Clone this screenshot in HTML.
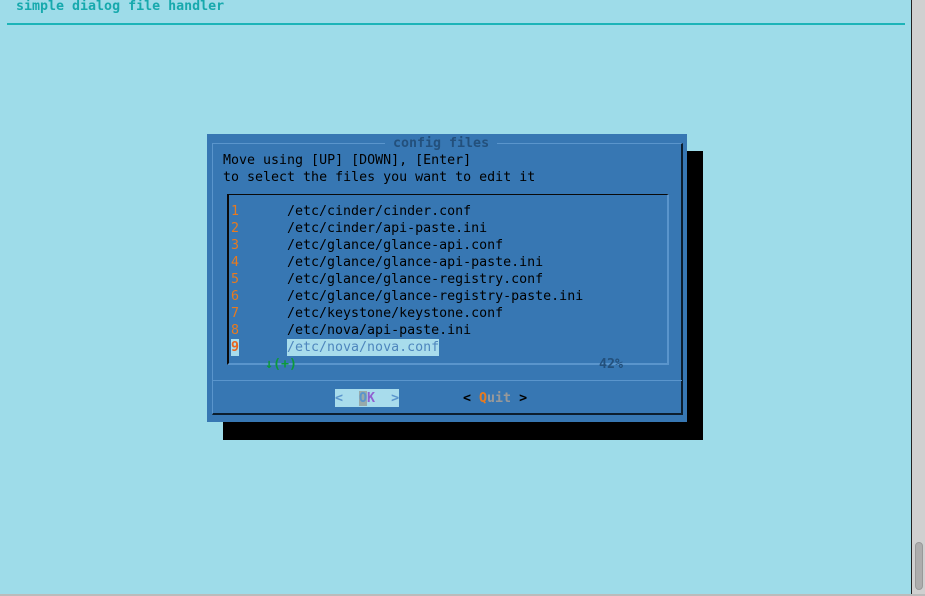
<!DOCTYPE html>
<html><head><style>
body{margin:0;width:925px;height:596px;background:#9edce9;position:relative;overflow:hidden;font-family:"DejaVu Sans Mono","Liberation Mono",monospace;font-size:13.3px}
.a{position:absolute;white-space:pre;line-height:17px}
</style></head><body>
<div class="a" style="left:16px;top:-2px;color:#17a9ad;font-weight:bold">simple dialog file handler</div>
<div style="position:absolute;left:7px;top:23px;width:898px;height:2px;background:#1cb4b8"></div>
<div style="position:absolute;left:911px;top:0;width:1px;height:594px;background:#222"></div>
<div style="position:absolute;left:912px;top:0;width:13px;height:596px;background:#d0d0d0"></div>
<div style="position:absolute;left:915px;top:542px;width:8px;height:48px;background:#adadad;border:1px solid #999;border-radius:4px;box-sizing:border-box"></div>
<div style="position:absolute;left:0;top:594px;width:925px;height:2px;background:#bbb"></div>
<div style="position:absolute;left:223px;top:151px;width:480px;height:289px;background:#000"></div>
<div style="position:absolute;left:207px;top:134px;width:480px;height:288px;background:#3777b3"></div>
<div style="position:absolute;left:212px;top:143px;width:471px;height:272px;border-top:1px solid #5a95cc;border-left:1px solid #5a95cc;border-right:2px solid #0c1e2e;border-bottom:2px solid #0c1e2e;box-sizing:border-box"></div>
<div style="position:absolute;left:213px;top:380px;width:469px;height:1px;background:#5a95cc"></div>
<div class="a" style="left:385px;top:135px;color:#23507c;font-weight:bold;background:#3777b3"> config files </div>
<div class="a" style="left:223px;top:152px;color:#000">Move using [UP] [DOWN], [Enter]
to select the files you want to edit it</div>
<div style="position:absolute;left:227px;top:194px;width:442px;height:171px;border-top:1px solid #0a0a0a;border-left:2px solid #0a0a0a;border-right:2px solid #5a95cc;border-bottom:2px solid #5a95cc;box-sizing:border-box"></div>
<div class="a" style="left:231px;top:203px;color:#e87a1e">1
2
3
4
5
6
7
8</div>
<div class="a" style="left:287px;top:203px;color:#000">/etc/cinder/cinder.conf
/etc/cinder/api-paste.ini
/etc/glance/glance-api.conf
/etc/glance/glance-api-paste.ini
/etc/glance/glance-registry.conf
/etc/glance/glance-registry-paste.ini
/etc/keystone/keystone.conf
/etc/nova/api-paste.ini</div>
<div class="a" style="left:231px;top:339px;color:#e8641e;background:#a8dcec;font-weight:bold">9</div>
<div class="a" style="left:287px;top:339px;color:#4e86bd;background:#a8dcec">/etc/nova/nova.conf</div>
<div class="a" style="left:265px;top:356px;color:#0c9a3a;font-weight:bold">↓(+)</div>
<div class="a" style="left:599px;top:356px;color:#23507c;font-weight:bold">42%</div>
<div class="a" style="left:335px;top:389px;height:17px;color:#5a95cc;background:#a8dcec;font-weight:bold;padding-top:1px">&lt;  <span style="background:#9aa;color:#5a95cc">O</span><span style="color:#9060d0">K</span>  &gt;</div>
<div class="a" style="left:463px;top:390px;color:#000;font-weight:bold">&lt; <span style="color:#e87a1e">Q</span><span style="color:#999">uit</span> &gt;</div>
</body></html>
